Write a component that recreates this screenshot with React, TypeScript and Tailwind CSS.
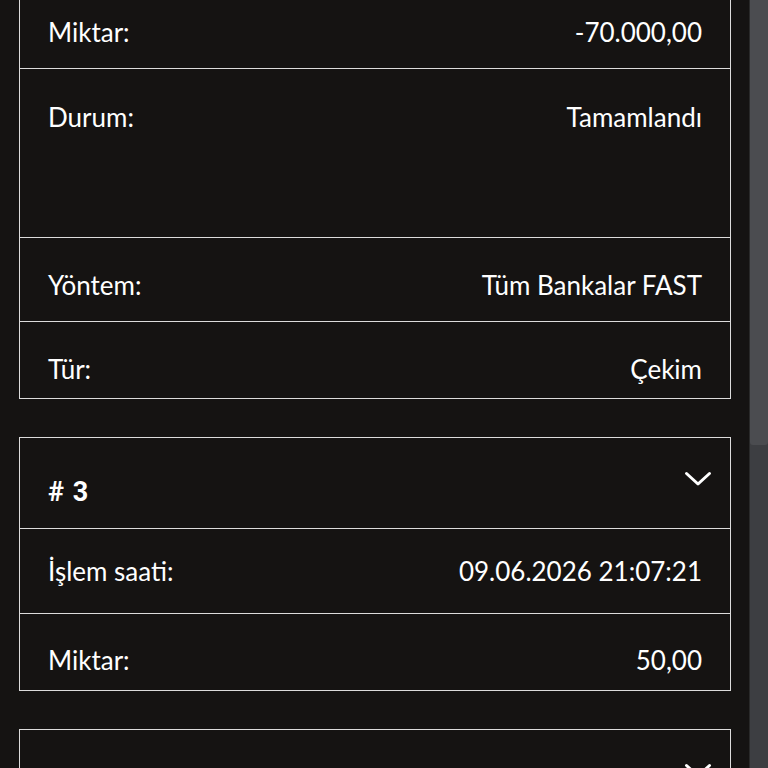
const LATO = { fontFamily: 'Lato, "Noto Sans", sans-serif' }

function Row({ label, value, h, pt = 'pt-[31px]', top = false }: { label: string; value: string; h: string; pt?: string; top?: boolean }) {
  return (
    <div className={`${h} ${pt} ${top ? '' : 'border-t border-[#dcdcdc]'} px-[28px] flex items-start justify-between text-[26px] leading-[31px] text-white`}>
      <span>{label}</span>
      <span>{value}</span>
    </div>
  )
}

function Chevron() {
  return (
    <svg width="28" height="18" viewBox="0 0 28 18" fill="none" className="text-white">
      <path d="M2.5 3.5 L14 14 L25.5 3.5" stroke="currentColor" strokeWidth="3" strokeLinecap="round" strokeLinejoin="round" />
    </svg>
  )
}

function Header({ title, h }: { title?: string; h: string }) {
  return (
    <div className={`${h} relative px-[28px]`}>
      {title && (
        <span className="absolute left-[28px] top-[39px] text-[27px] leading-[31px] font-bold text-white tracking-[1px]" style={{ fontFamily: 'Roboto, sans-serif' }}>
          {title}
        </span>
      )}
      <span className="absolute right-[18px] top-[32px]"><Chevron /></span>
    </div>
  )
}

export default function App() {
  return (
    <div className="flex h-[768px] overflow-hidden bg-[#151312]" style={LATO}>
      <div className="flex-1 flex flex-col gap-[38px] pl-[19px] pr-[18px] -mt-[17px]">
        <div className="border border-[#dcdcdc]">
          <Row label="Miktar:" value="-70.000,00" h="h-[84px]" pt="pt-[33px]" top />
          <Row label="Durum:" value="Tamamlandı" h="h-[169px]" pt="pt-[33px]" />
          <Row label="Yöntem:" value="Tüm Bankalar FAST" h="h-[84px]" pt="pt-[32px]" />
          <Row label="Tür:" value="Çekim" h="h-[77px]" pt="pt-[32px]" />
        </div>
        <div className="border border-[#dcdcdc]">
          <Header title="# 3" h="h-[90px]" />
          <Row label="İşlem saati:" value="09.06.2026 21:07:21" h="h-[85px]" pt="pt-[27px]" />
          <Row label="Miktar:" value="50,00" h="h-[77px]" />
        </div>
        <div className="border border-[#dcdcdc] shrink-0">
          <Header h="h-[90px]" />
        </div>
      </div>
      <div className="w-[19px] shrink-0 flex flex-col bg-[#3d3e42] border-l border-[#2a2a2a]">
        <div className="h-[445px] bg-[#4b4c50] rounded-b-[3px]" />
      </div>
    </div>
  )
}
